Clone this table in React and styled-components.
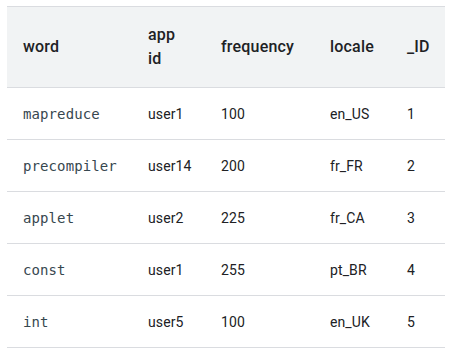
import styled, { createGlobalStyle } from 'styled-components'

const GlobalStyle = createGlobalStyle`
  body {
    margin: 0;
    background: #ffffff;
    font-family: Roboto, "Noto Sans", sans-serif;
    color: #202124;
  }
`

const Page = styled.div`
  padding: 6px 6px 0 7px;
`

const Table = styled.table`
  width: 438px;
  border-collapse: collapse;
  table-layout: fixed;
  border-top: 1px solid #dadce0;
  font-size: 14px;
`

const HeadCell = styled.th`
  width: ${(p) => p.$w}px;
  height: 81px;
  padding: 0 16px;
  box-sizing: border-box;
  background: #f1f3f4;
  border-bottom: 1px solid #dadce0;
  text-align: left;
  vertical-align: middle;
  font-weight: 500;
  font-size: 16px;
  line-height: 24px;
  letter-spacing: 0.2px;
  color: #202124;
`

const Cell = styled.td`
  height: 52px;
  padding: 0 16px;
  box-sizing: border-box;
  border-bottom: 1px solid #dadce0;
  vertical-align: middle;
  line-height: 20px;
  letter-spacing: 0.1px;
  color: #202124;
`

const Code = styled.code`
  font-family: "DejaVu Sans Mono", "Liberation Mono", monospace;
  font-size: 14px;
  color: #37474f;
`

const columns = [
  { label: 'word', w: 125 },
  { label: 'app id', w: 73 },
  { label: 'frequency', w: 109 },
  { label: 'locale', w: 77 },
  { label: '_ID', w: 54 },
]

const rows = [
  ['mapreduce', 'user1', '100', 'en_US', '1'],
  ['precompiler', 'user14', '200', 'fr_FR', '2'],
  ['applet', 'user2', '225', 'fr_CA', '3'],
  ['const', 'user1', '255', 'pt_BR', '4'],
  ['int', 'user5', '100', 'en_UK', '5'],
]

const App = () => {
  return (
    <>
      <GlobalStyle />
      <Page>
        <Table>
          <thead>
            <tr>
              {columns.map((c) => (
                <HeadCell key={c.label} $w={c.w}>{c.label}</HeadCell>
              ))}
            </tr>
          </thead>
          <tbody>
            {rows.map((r) => (
              <tr key={r[0]}>
                <Cell><Code>{r[0]}</Code></Cell>
                {r.slice(1).map((v, i) => (
                  <Cell key={i}>{v}</Cell>
                ))}
              </tr>
            ))}
          </tbody>
        </Table>
      </Page>
    </>
  )
}

export default App
